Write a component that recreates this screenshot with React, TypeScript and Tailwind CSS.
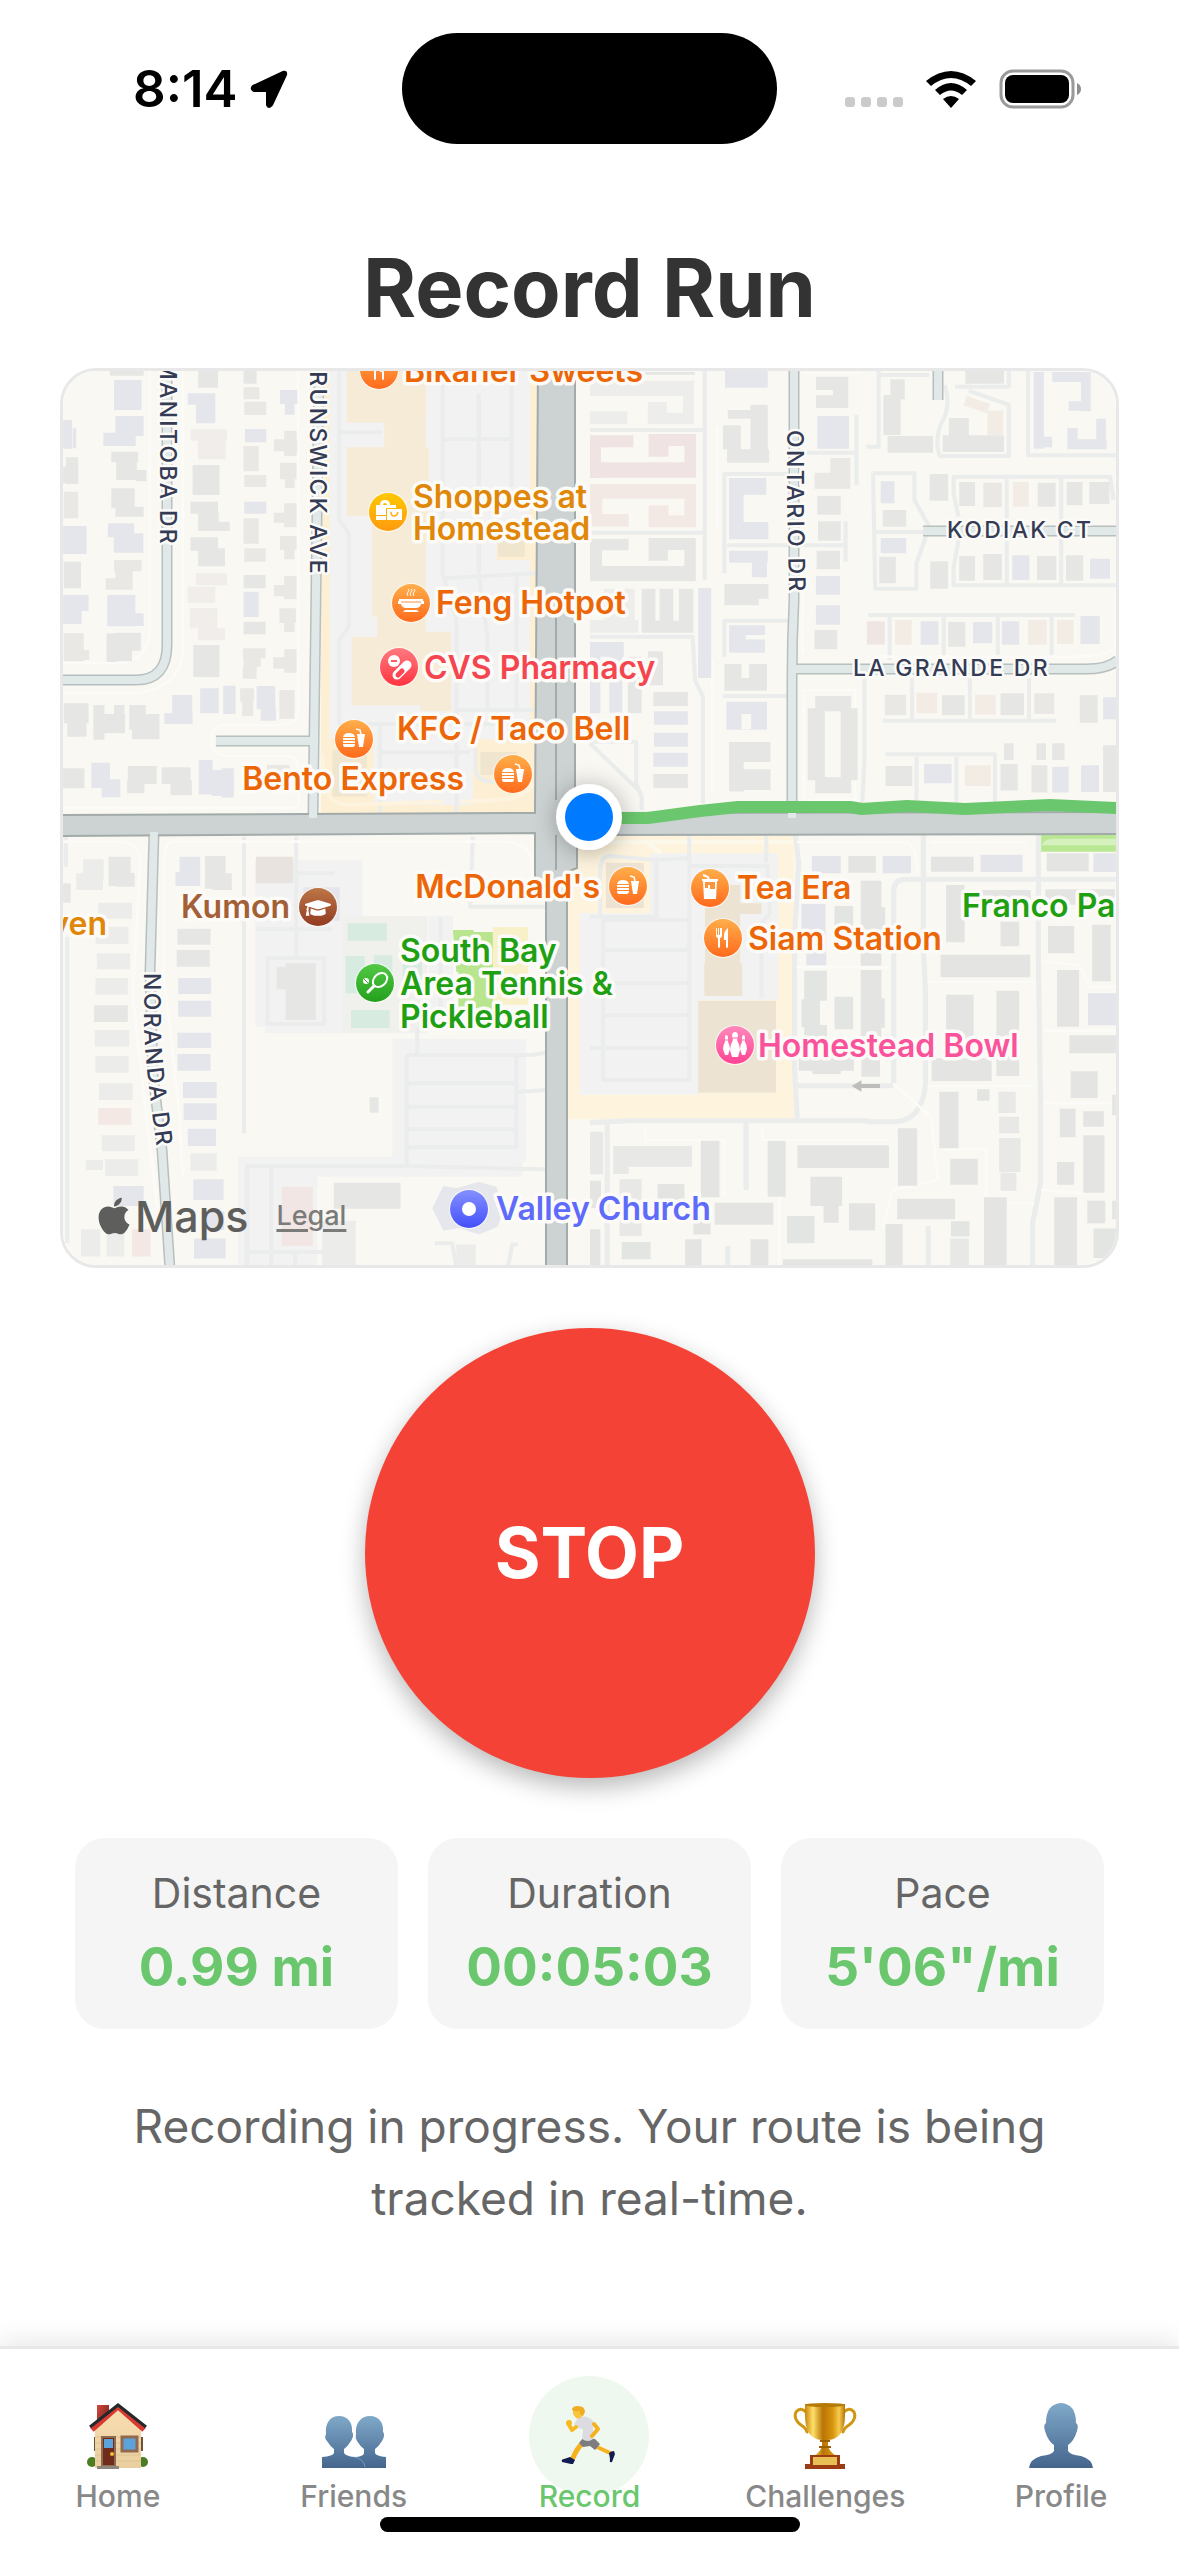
import type { ReactNode } from "react";
import { FaApple, FaGraduationCap } from "react-icons/fa";

type Box = [number, number, number, number];

/* ---------- map drawing ---------- */

const boxPath = (boxes: Box[]) => boxes.map(([x, y, w, h]) => `M${x} ${y}h${w}v${h}h${-w}z`).join("");

function Blocks({ fill, boxes }: { fill: string; boxes: Box[] }) {
  return <path d={boxPath(boxes)} fill={fill} />;
}

function Drives({ d, color = "#eaedec", width = 12 }: { d: string; color?: string; width?: number }) {
  return <path d={d} fill="none" stroke={color} strokeWidth={width} strokeLinejoin="round" />;
}

/* Each quarter of the map is drawn on its own local grid. */
function Quarter({ x, y, children }: { x: number; y: number; children: ReactNode }) {
  return <g transform={`translate(${x} ${y}) scale(0.3444 0.3333)`}>{children}</g>;
}

const GREY = "#e6e6e5";
const PALE = "#ececea";
const BLUE = "#e4e6eb";
const ROSE = "#efe5e3";
const WARM = "#eae8e5";
const TAN = "#f6ebd6";

function NorthWest() {
  return (
    <Quarter x={50} y={360}>
      <Blocks fill="#fcefd3" boxes={[[787, 0, 630, 1368]]} />
      <Blocks fill="#f2f2f2" boxes={[[812, 0, 582, 1138], [940, 1130, 288, 205]]} />
      <Blocks fill="#fcefd3" boxes={[[1297, 545, 118, 55]]} />
      <Drives d="M840 0V480L868 520V800L840 840V1092H1400M840 217H965M1140 0V640L1180 780V1365M1245 100V640L1270 830V1050M1340 33V380M1145 237H1340M1145 655L1410 640M1180 1050H1405M958 1092V1365M958 1177H1220M1355 650V1050" />
      <Drives d="M790 1180C800 1290 800 1330 860 1335L1140 1325M1195 1325C1320 1320 1390 1320 1400 1270" color="#fdf3df" />
      <Drives d="M1235 1165V1220Q1235 1265 1290 1265" />
      <Blocks fill={TAN} boxes={[[862, 0, 230, 188], [970, 187, 121, 76], [862, 262, 238, 207], [935, 468, 156, 302], [950, 769, 141, 64], [876, 831, 214, 205], [1075, 815, 90, 238]]} />
      <Blocks fill="#f0e5cf" boxes={[[820, 1170, 100, 140], [1250, 1175, 105, 70], [1300, 530, 78, 60]]} />
      <Drives d="M38 910H180Q280 910 290 820V33M38 1000H250Q395 980 385 850V33M720 33V1050Q720 1095 660 1095H510Q465 1095 470 1150Q475 1190 530 1188H690Q725 1190 722 1240V1330Q720 1345 690 1345H38" color="#fcfbf7" width={8} />

      <Blocks fill={BLUE} boxes={[[186, 60, 80, 90], [190, 168, 82, 60], [155, 218, 94, 40], [185, 520, 86, 58], [168, 490, 76, 42], [38, 498, 68, 84], [38, 705, 74, 48], [38, 750, 54, 42], [166, 705, 82, 94], [190, 760, 82, 38], [668, 90, 50, 42], [682, 130, 28, 34], [566, 207, 62, 40], [564, 425, 64, 36], [562, 695, 44, 76], [355, 1005, 58, 60], [332, 1060, 82, 32], [436, 985, 54, 75], [503, 977, 36, 85], [600, 978, 54, 70], [612, 1040, 44, 42], [120, 1208, 54, 76], [150, 1258, 54, 54], [432, 1200, 40, 104], [470, 1230, 30, 78], [498, 1225, 36, 88], [424, 100, 56, 90], [400, 100, 60, 34], [38, 180, 26, 86], [66, 205, 10, 60]]} />
      <Blocks fill={GREY} boxes={[[174, 33, 98, 14], [430, 33, 58, 50], [562, 33, 38, 38], [178, 275, 78, 32], [192, 300, 60, 60], [250, 330, 30, 34], [46, 292, 36, 80], [38, 320, 30, 50], [178, 385, 68, 60], [190, 440, 82, 30], [414, 315, 78, 90], [408, 425, 80, 36], [430, 455, 60, 58], [480, 485, 42, 28], [408, 532, 80, 40], [430, 565, 78, 54], [40, 605, 50, 80], [562, 645, 64, 40], [562, 785, 64, 38], [416, 855, 76, 96], [40, 1030, 72, 60], [50, 1080, 56, 50], [126, 1035, 32, 104], [126, 1062, 92, 58], [186, 1035, 30, 70], [230, 1035, 48, 74], [238, 1062, 80, 76], [226, 1218, 84, 54], [224, 1262, 50, 38], [324, 1222, 84, 50], [350, 1260, 62, 46], [38, 1225, 62, 60], [164, 820, 30, 86], [190, 818, 74, 54], [190, 850, 48, 54]]} />
      <Blocks fill={WARM} boxes={[[162, 655, 78, 34], [186, 600, 80, 34], [190, 630, 50, 50], [40, 820, 58, 84], [90, 870, 24, 30], [40, 395, 42, 80], [562, 82, 46, 36], [564, 125, 64, 40], [562, 258, 44, 76], [564, 345, 64, 36], [562, 475, 44, 76], [564, 565, 62, 40], [560, 865, 66, 30], [562, 890, 50, 30], [560, 920, 40, 36], [680, 212, 36, 76], [650, 238, 68, 36], [668, 308, 48, 50], [682, 350, 28, 34], [680, 430, 36, 72], [650, 458, 66, 30], [668, 528, 48, 42], [680, 560, 30, 38], [680, 648, 36, 70], [650, 675, 66, 34], [666, 745, 48, 44], [680, 780, 30, 36], [680, 868, 36, 70], [648, 892, 66, 34], [552, 985, 40, 40], [558, 1020, 32, 48], [666, 990, 44, 86], [630, 1215, 66, 50]]} />
      <Blocks fill="#f0edea" boxes={[[408, 208, 106, 34], [430, 240, 80, 58], [424, 640, 90, 36], [400, 680, 80, 48], [406, 745, 80, 60], [430, 805, 78, 36]]} />
    </Quarter>
  );
}

function NorthEast() {
  return (
    <Quarter x={590} y={360}>
      <Drives d="M333 33V660M0 210H330M0 518H330M0 830H298L305 960L328 1010V1330M390 640V342H600M398 556H742V605M742 484V556M390 890V782H590M386 1008H580M630 278H774V375M774 165V278M0 1145H134V1270L150 1310V1350M0 1150L140 1290M838 33V260H802M838 45H985M1030 75Q1050 140 1020 190Q1000 240 1015 288H1216V135L1100 92M1060 80H1216V33M1272 33V286H1527M822 340H942V420L985 500L948 610V686H828L822 340M822 516H985M1070 540L1056 620V676H1527M1070 470L1056 400V350H1510L1520 420M1210 350V676M1368 350V676M808 765H1408M870 770V900M1027 770V890M1184 770V890M1340 770V890M797 955V1200L790 1340M935 955V1080M1103 955V1080M1275 955V1080M850 1082H1354M858 1183H1176V1330M948 1190V1330M1064 1190V1330" />
      <Drives d="M620 40H780M620 880Q610 860 620 700M370 200V500M1527 700V850Q1520 890 1400 890H830M355 900V1300M620 990H770V1320H620z" color="#fcfbf7" width={8} />
      <Blocks fill="#ededeb" boxes={[[0, 62, 302, 46], [0, 154, 108, 38], [168, 126, 55, 66], [180, 158, 122, 35], [270, 100, 32, 92], [0, 780, 140, 38], [40, 686, 90, 110]]} />
      <Blocks fill="#efe4e3" boxes={[[0, 226, 126, 36], [0, 226, 32, 128], [0, 307, 308, 46], [274, 222, 34, 130], [170, 222, 136, 36], [170, 222, 58, 68]]} />
      <Blocks fill="#f3e9e4" boxes={[[0, 372, 308, 44], [274, 372, 34, 130], [170, 466, 136, 36], [170, 436, 58, 60], [0, 462, 112, 38], [0, 400, 36, 80]]} />
      <Blocks fill={GREY} boxes={[[0, 536, 112, 35], [0, 536, 35, 125], [0, 618, 306, 46], [274, 534, 33, 130], [170, 534, 136, 36], [170, 534, 56, 68], [400, 150, 114, 26], [466, 134, 50, 174], [398, 268, 122, 40], [386, 196, 52, 72], [158, 36, 146, 8], [656, 50, 94, 94], [872, 58, 42, 60], [852, 105, 50, 120], [864, 228, 132, 50], [1042, 174, 58, 54], [1024, 226, 178, 50], [1090, 33, 112, 38], [660, 408, 68, 56], [662, 484, 66, 58], [658, 572, 68, 56], [652, 810, 66, 58], [150, 686, 150, 132], [390, 672, 128, 44], [390, 700, 100, 36], [390, 912, 124, 80], [404, 1146, 120, 60], [404, 1200, 42, 95], [404, 1228, 120, 62], [632, 1045, 145, 216], [654, 1008, 104, 292], [184, 996, 100, 42], [184, 1242, 100, 42], [1072, 366, 46, 72], [1300, 368, 52, 72], [1384, 366, 46, 70], [986, 342, 54, 80], [850, 450, 68, 50], [1450, 366, 58, 66], [1072, 588, 46, 74], [1142, 582, 54, 78], [1298, 588, 56, 72], [1382, 586, 50, 76], [988, 604, 52, 82], [840, 590, 48, 80], [1022, 1006, 66, 60], [1192, 1000, 68, 66], [1422, 1006, 52, 82], [858, 1218, 78, 60], [1040, 786, 50, 74], [1192, 1212, 50, 80], [1282, 1216, 46, 82], [1202, 1150, 28, 50], [1296, 1150, 28, 50], [1342, 1150, 36, 50], [1490, 1156, 37, 140], [168, 874, 44, 102], [110, 890, 40, 170]]} />
      <Blocks fill="#f9f8f3" boxes={[[656, 90, 50, 16], [440, 937, 22, 16], [440, 910, 22, 44], [682, 1054, 46, 198], [190, 686, 12, 96], [242, 686, 16, 96]]} />
      <Blocks fill={BLUE} boxes={[[392, 33, 124, 50], [660, 168, 92, 98], [404, 354, 108, 50], [404, 354, 42, 184], [404, 486, 114, 52], [656, 648, 70, 56], [656, 736, 70, 58], [314, 684, 38, 270], [404, 796, 104, 30], [404, 800, 50, 76], [404, 838, 104, 40], [0, 846, 98, 44], [0, 880, 30, 180], [56, 880, 38, 178], [186, 1054, 98, 40], [186, 1118, 98, 42], [184, 1178, 100, 42], [396, 1025, 118, 84], [844, 364, 40, 66], [844, 534, 74, 46], [1226, 586, 50, 74], [1452, 596, 58, 60], [1112, 786, 56, 64], [1196, 784, 50, 70], [960, 784, 52, 70], [1424, 768, 56, 84], [1288, 36, 30, 230], [1310, 230, 32, 32], [1342, 36, 110, 30], [1426, 36, 28, 118], [1390, 124, 62, 28], [1470, 176, 28, 92], [1386, 204, 30, 62], [1386, 238, 114, 30], [1342, 1220, 48, 78], [1426, 1216, 52, 80], [970, 1212, 80, 58], [1490, 1012, 37, 66], [404, 572, 112, 36], [470, 580, 44, 72]]} />
      <Blocks fill="#f9f8f3" boxes={[[440, 1062, 28, 46], [452, 826, 56, 12]]} />
      <Blocks fill={WARM} boxes={[[698, 294, 58, 92], [652, 338, 90, 48], [1142, 368, 54, 74], [856, 1004, 62, 62], [1290, 1000, 58, 62]]} />
      <Blocks fill="#f2ece5" boxes={[[1228, 366, 46, 74], [1154, 152, 46, 74], [886, 780, 48, 74], [1272, 780, 54, 74], [1356, 780, 48, 72], [948, 998, 60, 62], [1118, 1004, 60, 60], [1088, 1216, 76, 62]]} />
      <Blocks fill={ROSE} boxes={[[804, 784, 52, 70]]} />
      <path d="M1094 108L1162 132L1152 160L1084 136z" fill="#f2ece5" />
    </Quarter>
  );
}

function SouthWest() {
  return (
    <Quarter x={50} y={810}>
      <Blocks fill="#f2f2f3" boxes={[[596, 150, 312, 500], [994, 686, 388, 370], [546, 1040, 826, 60], [546, 1090, 230, 280], [1100, 318, 70, 340], [624, 640, 470, 30]]} />
      <Blocks fill="#f0f0ec" boxes={[[848, 318, 248, 350]]} />
      <Blocks fill="#f9f8f3" boxes={[[1184, 660, 198, 28]]} />
      <Drives d="M563 80V970M715 80V440M605 190H825M600 358H818M632 444H796V642H632zM1228 80L1220 290H1440M1134 322V600M1066 650V735M1036 735H1400L1440 728M1036 735V1065M1036 820H1350M1036 890H1350M1036 958H1350M1036 1012H1354V740M1360 845L1440 840M1440 1078L1036 1068H572V1370M642 1075V1370M570 1326H790M712 1330V1370M1118 1300H1168L1180 1370M1358 1304H1342L1330 1370M46 80V170M50 380V1300" />
      <Drives d="M38 95H200Q262 95 262 160L240 560L312 1200M400 95H350Q330 110 330 160V490L375 900L385 1100M400 95H1320Q1400 100 1400 170V260" color="#fcfbf7" width={8} />
      <Blocks fill="#d8ebe0" boxes={[[864, 340, 114, 52], [858, 438, 56, 112], [940, 436, 54, 100], [1024, 420, 56, 110], [874, 600, 112, 54]]} />
      <path d="M1170 360H1230V366H1286V600L1186 590V486H1180z" fill="#b9e58f" />
      <Blocks fill="#f7f0c9" boxes={[[1286, 352, 102, 232]]} />
      <Blocks fill={GREY} boxes={[[170, 140, 64, 88], [190, 188, 56, 42], [450, 138, 60, 98], [470, 190, 58, 50], [370, 356, 96, 48], [368, 420, 96, 50], [128, 586, 98, 50], [684, 460, 88, 170], [658, 470, 40, 68], [928, 862, 26, 46], [824, 1118, 194, 78], [38, 220, 22, 58]]} />
      <Blocks fill={PALE} boxes={[[96, 148, 60, 60], [76, 190, 78, 50], [140, 278, 98, 48], [132, 350, 96, 52], [136, 430, 96, 48], [132, 504, 94, 50], [130, 660, 100, 50], [132, 738, 96, 50], [142, 820, 98, 50], [150, 976, 96, 48], [160, 1048, 96, 50], [90, 1258, 56, 82], [164, 1258, 52, 82], [408, 1030, 76, 52], [790, 1232, 98, 136], [1180, 1304, 56, 66], [104, 1050, 50, 30]]} />
      <Blocks fill={BLUE} boxes={[[376, 140, 60, 88], [364, 186, 70, 42], [372, 504, 96, 48], [372, 572, 96, 48], [370, 668, 98, 46], [370, 732, 96, 50], [386, 816, 98, 48], [388, 880, 96, 50], [400, 956, 82, 52], [416, 1108, 88, 62], [418, 1286, 92, 60], [184, 1128, 88, 60], [440, 1204, 66, 56], [735, 232, 106, 100]]} />
      <Blocks fill="#e9e3e0" boxes={[[598, 140, 108, 80]]} />
      <Blocks fill="#f3e8e4" boxes={[[140, 894, 96, 50], [238, 1258, 54, 82]]} />
      <Blocks fill="#f2e6e5" boxes={[[673, 1130, 90, 178]]} />
      <path d="M1142 1128L1180 1135L1245 1116L1296 1130L1318 1195L1300 1250L1246 1274L1190 1255L1142 1262L1110 1195z" fill="#e5e7ed" />
    </Quarter>
  );
}

function SouthEast() {
  return (
    <Quarter x={590} y={810}>
      <Blocks fill="#fef4de" boxes={[[-88, 70, 680, 858]]} />
      <Blocks fill="#f2f2f3" boxes={[[-30, 310, 346, 544], [174, 130, 372, 440]]} />
      <Drives d="M0 97H590M170 100L205 130" color="#fdf8ec" />
      <Drives d="M288 70V810H38V325M193 150V320H0M290 168H515L522 310L498 340V560M38 330H285M38 420H285M38 520H285M38 616H285M0 714H285M512 70V160M30 320V180Q32 135 60 138L190 150L290 144" />
      <Drives d="M596 70L606 160L594 380V780L602 930M600 827H880M882 825V240Q884 208 920 208H1527M968 70V410L974 540V830Q960 930 890 935H800M0 938L110 932H810M1302 70V440L1308 880V1120L1285 1240V1370M50 930V1370M453 940V1140M982 1248V1370M400 1308V1370" width={15} />
      <Drives d="M600 472H870M980 516H1295M880 820L990 920L1010 1110L880 1140L850 1250M980 828H1290M1320 662H1527M1320 880H1527M1320 455L1420 465L1450 530H1527M1310 1140L1440 1150M160 950V990H390V1160M500 950V990H870M1020 1018H1150V1180L1290 1180M550 1370V1160M600 96H920Q950 110 950 190M990 96H1270" color="#fcfbf7" width={8} />
      <Blocks fill="#b9e793" boxes={[[1310, 70, 217, 55]]} />
      <path d="M1312 106Q1318 86 1345 86H1527V106z" fill="#d6f1bd" />
      <Blocks fill="#ede3d3" boxes={[[46, 158, 110, 136], [334, 225, 102, 330], [340, 280, 158, 32], [332, 460, 110, 98], [314, 572, 226, 276]]} />
      <Blocks fill="#e4e4e3" boxes={[[786, 212, 60, 255], [804, 292, 53, 75], [786, 480, 60, 250], [806, 565, 50, 88], [606, 742, 160, 40], [646, 760, 82, 32], [788, 740, 54, 60], [1034, 225, 54, 172], [1018, 434, 260, 68], [1034, 554, 80, 150], [1180, 542, 66, 256], [992, 745, 174, 68], [1114, 240, 166, 40], [1192, 335, 54, 74], [1330, 348, 76, 82], [1458, 344, 54, 170], [1356, 480, 64, 170], [1392, 676, 135, 54], [1396, 784, 78, 80], [1014, 845, 56, 170], [1124, 838, 36, 34], [894, 955, 56, 172], [1046, 1046, 80, 78], [602, 1006, 266, 68], [322, 992, 54, 170], [1432, 976, 62, 172], [1356, 1056, 50, 68], [1364, 896, 46, 86], [1432, 904, 60, 46], [1144, 1162, 66, 206], [1348, 1162, 66, 206], [892, 1166, 168, 62], [196, 1122, 78, 66], [300, 1180, 50, 94], [362, 1178, 170, 66], [276, 1288, 48, 80], [466, 1288, 52, 80], [560, 1348, 260, 22], [858, 1242, 50, 126], [0, 1112, 32, 82], [0, 1258, 30, 110], [1444, 1172, 52, 68], [640, 1100, 92, 88], [678, 1160, 44, 78], [752, 1180, 76, 82], [1322, 238, 202, 46], [1326, 130, 122, 54], [990, 140, 124, 45], [750, 138, 80, 50], [1516, 854, 11, 62], [1516, 1172, 11, 56]]} />
      <Blocks fill="#e8e8e7" boxes={[[68, 1008, 228, 62], [68, 1050, 44, 42], [1186, 845, 50, 64], [1188, 920, 58, 50], [1188, 984, 62, 102], [1192, 1088, 46, 54], [86, 1108, 64, 170], [1046, 1286, 54, 82], [0, 965, 38, 128]]} />
      <Blocks fill="#e2e5e2" boxes={[[622, 482, 66, 90], [614, 568, 54, 84], [622, 645, 66, 60], [710, 560, 54, 98], [710, 288, 54, 60], [516, 992, 52, 168], [572, 1218, 80, 82], [92, 1296, 84, 52], [1048, 1234, 54, 46], [1462, 1256, 65, 88]]} />
      <Blocks fill="#e4e5ea" boxes={[[644, 138, 84, 52], [850, 138, 82, 52], [614, 282, 70, 90], [628, 370, 58, 96], [1134, 134, 122, 52], [1462, 130, 65, 56], [1446, 550, 81, 96]]} />
      <path d="M760 828L788 811V822H842V834H788V845z" fill="#bdbdbb" />
    </Quarter>
  );
}

const MINOR_ROADS =
  "M167 366V645Q167 680 136 680H60M319 366L316 590L313 818M216 741H315M154 832L150 972L153 1075L162 1150L170 1270M794 366V600Q792 640 792 680V818M792 669H1086Q1108 669 1118 660M923 531H1120M938 366V400";

function Roads() {
  return (
    <g fill="none">
      <path d={MINOR_ROADS} stroke="#b7bfbf" strokeWidth="11" />
      <path
        d="M60 815L535 813L538 366H575V813L1120 812V834L577 835V868L567 872V1270H546V900L535 878V833L60 836z"
        fill="#cdd3d3"
        stroke="#a3aaaa"
        strokeWidth="2"
      />
      <path d={MINOR_ROADS} stroke="#e1e8e8" strokeWidth="8" />
      <path d="M556 600V800M556 835V870" stroke="#a3aaaa" strokeWidth="2" />
    </g>
  );
}

const ORANGE = "#ec6608";
const AMBER = "#e08708";
const GREEN = "#1fa012";

const burger = (
  <g fill="#fff">
    <path d="M-11 -2Q-10 -6 -5 -6T1 -2z" />
    <path d="M-11 -1H1V1H-11zM-11 2H1V4H-11zM-11 5H1Q1 8 -1 8H-9Q-11 8 -11 5z" />
    <path d="M3 -5H11L9 8H5z" />
    <path d="M7 -5L6 -9L2 -10" fill="none" stroke="#fff" strokeWidth="1.5" />
  </g>
);

const utensils = (
  <g fill="#fff">
    <path d="M-7 -10H-6V-3H-5V-10H-4V-3H-3V-10H-1V-3Q-1 0 -3 0V9Q-4 11 -5 9V0Q-7 0 -7 -3z" />
    <path d="M5 -10V9Q4 11 3 9V2H1Q0 -7 5 -10z" />
  </g>
);

type Kind = "orange" | "amber" | "red" | "brown" | "green" | "pink" | "blue";

const GRADIENTS: Record<Kind, [string, string]> = {
  orange: ["#ffae4a", "#ff6a1c"],
  amber: ["#ffc800", "#ff9a10"],
  red: ["#ff7a80", "#ff3440"],
  brown: ["#bd7647", "#923b22"],
  green: ["#52c944", "#23a01d"],
  pink: ["#ff88bb", "#ff4394"],
  blue: ["#8490ff", "#4450fa"],
};

function Pin({ x, y, kind, children }: { x: number; y: number; kind: Kind; children: ReactNode }) {
  return (
    <g transform={`translate(${x} ${y})`}>
      <circle r="20" fill="#fff" opacity="0.7" />
      <circle r="19" fill={`url(#pin-${kind})`} />
      {children}
    </g>
  );
}

function Pins() {
  return (
    <>
      <Pin x={379} y={370} kind="orange">{utensils}</Pin>
      <Pin x={388} y={512} kind="amber">
        <path d="M-12 -7H-8Q-8 -12 -3 -12T2 -7H8V-4H-2V3H-12zM-5 -7H-1Q-1 -9 -3 -9T-5 -7zM-12 4H-2V8H-12zM-1 -3H14V8H-1z" fill="#fff" fillRule="evenodd" />
        <path d="M3 0Q3 4 6 4T10 0" fill="none" stroke="#ffae0a" strokeWidth="1.5" />
      </Pin>
      <Pin x={411} y={603} kind="orange">
        <path d="M-12 -4H12V-2H13V1H10Q9 5 5 5H-5Q-9 5 -10 1H-13V-2H-12zM-6 7H6L8 9H-8z" fill="#fff" />
        <path d="M-10 -1H10" stroke="#ff8f38" />
        <path d="M-3 -7Q-5 -9 -3 -11T-3 -14M0 -7Q-2 -9 0 -11T0 -14M3 -7Q1 -9 3 -11T3 -14" fill="none" stroke="#fff" />
      </Pin>
      <Pin x={399} y={667} kind="red">
        <circle cx="-5" cy="-6" r="6" fill="#fff" />
        <path d="M-8 -6H-2" stroke="#ff5d65" strokeWidth="2" />
        <path d="M-2 8L8 -2" stroke="#fff" strokeWidth="9" strokeLinecap="round" />
        <path d="M-1 8L3 4" stroke="#ff4550" strokeWidth="5" strokeLinecap="round" />
      </Pin>
      <Pin x={354} y={739} kind="orange">{burger}</Pin>
      <Pin x={513} y={774} kind="orange">{burger}</Pin>
      <Pin x={628} y={886} kind="orange">{burger}</Pin>
      <Pin x={710} y={888} kind="orange">
        <path d="M-8 -9H8V-7H7L6 11H-6L-7 -7H-8z" fill="#fff" />
        <path d="M-5 -6H5V1H0V-3H-2V0H-5z" fill="#ff9538" />
        <path d="M-1 -8L-2 -11L-7 -13" fill="none" stroke="#fff" strokeWidth="2" />
      </Pin>
      <Pin x={723} y={938} kind="orange">{utensils}</Pin>
      <Pin x={318} y={907} kind="brown">
        <FaGraduationCap x={-13} y={-12} size={26} color="#fff" />
      </Pin>
      <Pin x={375} y={983} kind="green">
        <ellipse cx="5" cy="-3" rx="8" ry="6" transform="rotate(-42 5 -3)" fill="none" stroke="#fff" strokeWidth="2" />
        <path d="M-1 3L-7 9" stroke="#fff" strokeWidth="3" strokeLinecap="round" />
        <circle cx="-9" cy="-2" r="3" fill="#fff" />
        <path d="M-11 -4L-7 0" stroke="#39b42f" />
      </Pin>
      <Pin x={735} y={1045} kind="pink">
        <path d="M0 -13Q3 -13 3 -9L2 -5Q5 0 5 5L3 12H-3L-5 5Q-5 0 -2 -5L-3 -9Q-3 -13 0 -13z" fill="#fff" />
        <path d="M-9 -10Q-7 -10 -7 -7V-3Q-5 0 -5 4L-7 10H-10L-12 4Q-12 0 -10 -3V-7Q-10 -10 -9 -10zM9 -10Q7 -10 7 -7V-3Q5 0 5 4L7 10H10L12 4Q12 0 10 -3V-7Q10 -10 9 -10z" fill="#fff" />
        <path d="M-3 -7H3M-10 -5H-7M7 -5H10" stroke="#ff68a8" />
      </Pin>
      <Pin x={469} y={1209} kind="blue">
        <circle r="7" fill="#fff" />
      </Pin>
    </>
  );
}

const PLACES: { text: string; x: number; y: number; color: string; end?: boolean }[] = [
  { text: "Bikaner Sweets", x: 404, y: 382, color: ORANGE },
  { text: "Shoppes at", x: 413, y: 508, color: AMBER },
  { text: "Homestead", x: 413, y: 540, color: AMBER },
  { text: "Feng Hotpot", x: 436, y: 614, color: ORANGE },
  { text: "CVS Pharmacy", x: 424, y: 679, color: "#f5464f" },
  { text: "KFC / Taco Bell", x: 397, y: 740, color: ORANGE },
  { text: "Bento Express", x: 464, y: 790, color: ORANGE, end: true },
  { text: "Kumon", x: 290, y: 918, color: "#a35f37", end: true },
  { text: "7-Eleven", x: 107, y: 935, color: AMBER, end: true },
  { text: "McDonald's", x: 600, y: 898, color: ORANGE, end: true },
  { text: "Tea Era", x: 737, y: 899, color: ORANGE },
  { text: "Siam Station", x: 748, y: 950, color: ORANGE },
  { text: "South Bay", x: 400, y: 962, color: GREEN },
  { text: "Area Tennis &", x: 400, y: 995, color: GREEN },
  { text: "Pickleball", x: 400, y: 1028, color: GREEN },
  { text: "Homestead Bowl", x: 758, y: 1057, color: "#fb539b" },
  { text: "Valley Church", x: 496, y: 1220, color: "#5f6bfa" },
  { text: "Franco Park", x: 962, y: 917, color: GREEN },
];

function Labels() {
  return (
    <g strokeLinejoin="round" stroke="#fcfbf8" paintOrder="stroke">
      <g fill="#343b55" strokeWidth="5" className="text-[23px] font-medium tracking-widest">
        <text textAnchor="end" transform="translate(160 546) rotate(90)">MANITOBA DR</text>
        <text textAnchor="end" transform="translate(310 576) rotate(90)">BRUNSWICK AVE</text>
        <text><textPath href="#ontario">ONTARIO DR</textPath></text>
        <text><textPath href="#noranda">NORANDA DR</textPath></text>
        <text x="947" y="538">KODIAK CT</text>
        <text x="853" y="676">LA GRANDE DR</text>
      </g>
      <g strokeWidth="7" className="text-[32px] font-semibold">
        {PLACES.map((p) => (
          <text key={p.text} x={p.x} y={p.y} fill={p.color} textAnchor={p.end ? "end" : "start"}>
            {p.text}
          </text>
        ))}
      </g>
    </g>
  );
}

function RouteMap() {
  return (
    <svg viewBox="63 371 1053 894" role="img" aria-label="Map of the current route" className="block h-auto w-full bg-[#f9f8f3]">
      <defs>
        {(Object.keys(GRADIENTS) as Kind[]).map((k) => (
          <linearGradient key={k} id={`pin-${k}`} x1="0" y1="0" x2="0" y2="1">
            <stop offset="0" stopColor={GRADIENTS[k][0]} />
            <stop offset="1" stopColor={GRADIENTS[k][1]} />
          </linearGradient>
        ))}
        <path id="ontario" d="M787 430L787 500L790 640" />
        <path id="noranda" d="M144 973V1030Q146 1080 166 1210" />
        <filter id="dot-shadow" x="-50%" y="-50%" width="200%" height="200%">
          <feDropShadow dx="0" dy="2" stdDeviation="12" floodColor="#000" floodOpacity="0.3" />
        </filter>
      </defs>
      <NorthWest />
      <NorthEast />
      <SouthWest />
      <SouthEast />
      <Roads />
      <path d="M600 818H648L700 811L738 807H850L862 809L907 806L965 809L1050 805L1118 808" fill="none" stroke="#6bc76d" strokeWidth="12" strokeLinejoin="round" />
      <Labels />
      <Pins />
      <circle cx="589" cy="817" r="33" fill="#fff" filter="url(#dot-shadow)" />
      <circle cx="589" cy="817" r="24" fill="#007aff" />
    </svg>
  );
}

/* ---------- status bar ---------- */

function StatusBar() {
  return (
    <header className="grid grid-cols-[1fr_375px_1fr] items-center pt-[33px] text-black">
      <div className="flex items-center gap-3 pl-[133px]">
        <span className="text-[51px] leading-[60px] font-semibold">8:14</span>
        <svg viewBox="0 0 40 40" className="size-10" aria-hidden="true">
          <path d="M4 17L34 3Q38 2 37 6L23 36Q20 40 18 36V22H5Q1 20 4 17z" stroke="#000" strokeWidth="2" />
        </svg>
      </div>
      <div className="h-[111px] rounded-full bg-black" />
      <div className="flex items-center justify-end gap-[22px] pr-[97px]">
        <div className="mt-[26px] flex gap-[6px]">
          <i className="size-[10px] rounded-[3px] bg-[#cbcbcb]" />
          <i className="size-[10px] rounded-[3px] bg-[#cbcbcb]" />
          <i className="size-[10px] rounded-[3px] bg-[#cbcbcb]" />
          <i className="size-[10px] rounded-[3px] bg-[#cbcbcb]" />
        </div>
        <svg viewBox="0 0 52 38" className="h-[38px] w-[52px]" aria-hidden="true">
          <path d="M1 11Q26 -9 51 11L46 16Q26 0 6 16zM10 20Q26 6 42 20L37 25Q26 16 15 25zM18 29Q26 23 34 29L26 38z" />
        </svg>
        <svg viewBox="0 0 83 40" className="h-10 w-[83px]" aria-hidden="true">
          <rect x="2" y="2" width="72" height="36" rx="12" fill="none" stroke="#9a9a9a" strokeWidth="3" />
          <rect x="6" y="6" width="64" height="28" rx="8" />
          <path d="M78 14Q82 16 82 20T78 26z" fill="#8e8e8e" />
        </svg>
      </div>
    </header>
  );
}

/* ---------- tab bar ---------- */

function HouseIcon() {
  return (
    <svg viewBox="0 0 64 66" className="h-[66px] w-16" aria-hidden="true">
      <defs>
        <linearGradient id="wall" x1="0" y1="0" x2="0" y2="1">
          <stop offset="0" stopColor="#f7ddb0" />
          <stop offset="1" stopColor="#e9cf9f" />
        </linearGradient>
        <linearGradient id="brick" x1="0" y1="0" x2="1" y2="1">
          <stop offset="0" stopColor="#d1493f" />
          <stop offset="1" stopColor="#6f1812" />
        </linearGradient>
      </defs>
      <path d="M11 2H23V16L11 26z" fill="url(#brick)" />
      <circle cx="6" cy="59" r="5" fill="#4c7d25" />
      <circle cx="57" cy="59" r="5" fill="#4c7d25" />
      <path d="M8 34H11V48H8zM54 34H57V48H54z" fill="#6b5238" />
      <path d="M9 26L32 6L55 26V65H9z" fill="url(#wall)" />
      <path d="M9 34H55M9 40H55M9 46H55M9 52H55M9 58H55" stroke="#dcc291" strokeWidth="1" />
      <path d="M6 27L32 4L58 27" fill="none" stroke="#d83a31" strokeWidth="5" />
      <path d="M4 24L32 2L60 24" fill="none" stroke="#23282b" strokeWidth="3" />
      <path d="M15 33H30V63H15z" fill="#8f6a50" />
      <path d="M17 35H28V62H17z" fill="#6f2c1c" />
      <path d="M18 36H27V45H18zM37 35H50V47H37z" fill="#5ca3dc" />
      <path d="M36 34H51V48H36z" fill="none" stroke="#8f6a50" strokeWidth="3" />
      <circle cx="26" cy="51" r="2" fill="#f5c02c" />
      <path d="M11 63H33V66H11z" fill="#8d867d" />
    </svg>
  );
}

const SILHOUETTE = "M32 0Q47 1 47 20Q50 22 48 28Q45 38 39 42V48Q41 52 52 53Q63 56 64 65H0Q1 56 12 53Q23 52 25 48V42Q19 38 16 28Q14 22 17 20Q17 1 32 0z";

function ProfileIcon() {
  return (
    <svg viewBox="0 0 64 66" className="h-[66px] w-16" aria-hidden="true">
      <defs>
        <linearGradient id="person" x1="0" y1="0" x2="0" y2="1">
          <stop offset="0" stopColor="#7fa9c9" />
          <stop offset="1" stopColor="#45658d" />
        </linearGradient>
      </defs>
      <path d={SILHOUETTE} fill="url(#person)" />
    </svg>
  );
}

function FriendsIcon() {
  return (
    <svg viewBox="0 0 64 66" className="h-[66px] w-16" aria-hidden="true">
      <defs>
        <linearGradient id="people" x1="0" y1="0" x2="0" y2="1">
          <stop offset="0" stopColor="#7fa9c9" />
          <stop offset="1" stopColor="#45658d" />
        </linearGradient>
      </defs>
      <path d="M48 13C57 13 62 20 61 29C63 31 62 35 60 38Q57 43 53 46V50Q54 53 64 54V65H34V54Q42 53 42 50V46Q38 43 35 38Q33 35 34 31C33 20 39 13 48 13z" fill="url(#people)" />
      <path d="M17 13C26 13 31 20 30 29C32 31 31 35 29 38Q26 43 22 46V50Q24 53 32 54Q42 56 43 65H0V54Q11 53 12 50V46Q8 43 5 38Q2 35 4 31C3 20 8 13 17 13z" fill="url(#people)" />
      <path d="M32 54Q42 56 43 64" fill="none" stroke="#6f9fc4" strokeWidth="1" />
    </svg>
  );
}

function RunnerIcon() {
  return (
    <svg viewBox="0 0 64 66" className="h-[66px] w-16" aria-hidden="true">
      <path d="M26 40Q20 45 16 55" fill="none" stroke="#f6b11f" strokeWidth="5" strokeLinecap="round" />
      <path d="M38 43L53 50" fill="none" stroke="#f6b11f" strokeWidth="4" strokeLinecap="round" />
      <path d="M13 54L18 57L16 61H14L5 59Q4 56 7 56zM52 50Q54 48 57 48L58 51L55 59Q52 60 53 56z" fill="#101c52" />
      <path d="M26 35L38 36L43 41L38 47L33 43L26 44L22 40z" fill="#7c7c80" />
      <path d="M22 14Q31 12 36 18L36 36Q31 40 25 36L26 26L20 25L17 21z" fill="#dcdce0" />
      <path d="M19 24L15 27L12 22" fill="none" stroke="#f9b922" strokeWidth="4" strokeLinecap="round" strokeLinejoin="round" />
      <path d="M37 21L41 26L35 33" fill="none" stroke="#f6b11f" strokeWidth="4" strokeLinecap="round" strokeLinejoin="round" />
      <circle cx="12" cy="20" r="3" fill="#f9b922" />
      <path d="M16 6H26V12Q23 17 19 15L16 11z" fill="#fac43a" />
      <path d="M15 7Q15 3 21 3Q28 3 28 9L26 13L23 11V8Q18 9 15 7z" fill="#eead24" />
    </svg>
  );
}

function TrophyIcon() {
  return (
    <svg viewBox="0 0 64 66" className="h-[66px] w-16" aria-hidden="true">
      <defs>
        <linearGradient id="gold">
          <stop offset="0" stopColor="#c98508" />
          <stop offset="0.2" stopColor="#ffe06a" />
          <stop offset="0.45" stopColor="#b97405" />
          <stop offset="0.7" stopColor="#d9960e" />
          <stop offset="0.85" stopColor="#f5cc50" />
          <stop offset="1" stopColor="#b87506" />
        </linearGradient>
      </defs>
      <path d="M14 10Q8 3 3 9Q0 16 8 22Q13 25 14 29M50 10Q56 3 61 9Q64 16 56 22Q51 25 50 29" fill="none" stroke="#cf960f" strokeWidth="3" strokeLinecap="round" />
      <path d="M12 1H52V12Q52 36 35 37V43Q36 48 42 52H22Q28 48 29 43V37Q12 36 12 12z" fill="url(#gold)" />
      <ellipse cx="32" cy="2" rx="20" ry="2" fill="#b47a08" />
      <path d="M27 38H37M26 44H38" stroke="#9a6104" strokeWidth="2" />
      <path d="M17 52H47V61H52V66H12V61H17z" fill="#9b3c14" />
      <path d="M20 54H44V62H20z" fill="#e8bf55" />
    </svg>
  );
}

const TABS = [
  { label: "Home", icon: <HouseIcon /> },
  { label: "Friends", icon: <FriendsIcon /> },
  { label: "Record", icon: <RunnerIcon />, active: true },
  { label: "Challenges", icon: <TrophyIcon /> },
  { label: "Profile", icon: <ProfileIcon /> },
];

function TabBar() {
  return (
    <nav className="mt-auto border-t-[3px] border-[#e8e8e8] bg-white pt-[27px] pb-6 shadow-[0_-6px_24px_rgba(0,0,0,0.09)]">
      <div className="grid grid-cols-5">
        {TABS.map((t) => (
          <button key={t.label} type="button" aria-current={t.active ? "page" : undefined} className="flex flex-col items-center">
            <span className={t.active ? "flex size-[120px] items-center justify-center rounded-full bg-[#eff8ef]" : "flex size-[120px] items-center justify-center"}>
              {t.icon}
            </span>
            <span className={t.active ? "-mt-[18px] text-[30px] leading-9 font-medium text-[#6bc76d]" : "-mt-[18px] text-[30px] leading-9 font-medium text-[#888]"}>
              {t.label}
            </span>
          </button>
        ))}
      </div>
      <div className="mx-auto mt-[3px] h-[15px] w-[420px] rounded-full bg-black" />
    </nav>
  );
}

/* ---------- page ---------- */

const STATS = [
  { label: "Distance", value: "0.99 mi" },
  { label: "Duration", value: "00:05:03" },
  { label: "Pace", value: "5'06\"/mi" },
];

export default function App() {
  return (
    <div className="flex min-h-screen flex-col bg-white font-['Inter',sans-serif]">
      <StatusBar />
      <main className="flex flex-col px-[60px] pt-[94px] pb-[60px]">
        <h1 className="text-center text-[81px] leading-[100px] font-bold text-[#333]">Record Run</h1>
        <section className="relative mt-[30px] overflow-hidden rounded-[36px] border-[3px] border-[#e8e8e8]">
          <RouteMap />
          <div className="absolute bottom-[22px] left-[30px] flex items-center text-[#5e5e5d]">
            <FaApple size={42} aria-hidden="true" />
            <span className="text-[43px] leading-[54px] font-medium">Maps</span>
            <a href="#legal" className="ml-7 text-[27px] leading-8 font-medium text-[#7b7b79] underline decoration-[3px] underline-offset-4">
              Legal
            </a>
          </div>
        </section>
        <button type="button" className="mt-[60px] size-[450px] self-center rounded-full bg-[#f44336] text-[70px] leading-[84px] font-bold text-white shadow-[0_9px_24px_rgba(0,0,0,0.28)]">
          STOP
        </button>
        <dl className="mx-[15px] mt-[60px] grid grid-cols-3 gap-[30px]">
          {STATS.map((s) => (
            <div key={s.label} className="rounded-[30px] bg-[#f5f5f5] pt-[29px] pb-7 text-center">
              <dt className="text-[41px] leading-[52px] text-[#666]">{s.label}</dt>
              <dd className="mt-[14px] text-[53px] leading-[68px] font-bold text-[#6bc76d]">{s.value}</dd>
            </div>
          ))}
        </dl>
        <p className="mt-[61px] px-[60px] text-center text-[46px] leading-[72px] text-[#666]">
          Recording in progress. Your route is being tracked in real-time.
        </p>
      </main>
      <TabBar />
    </div>
  );
}
